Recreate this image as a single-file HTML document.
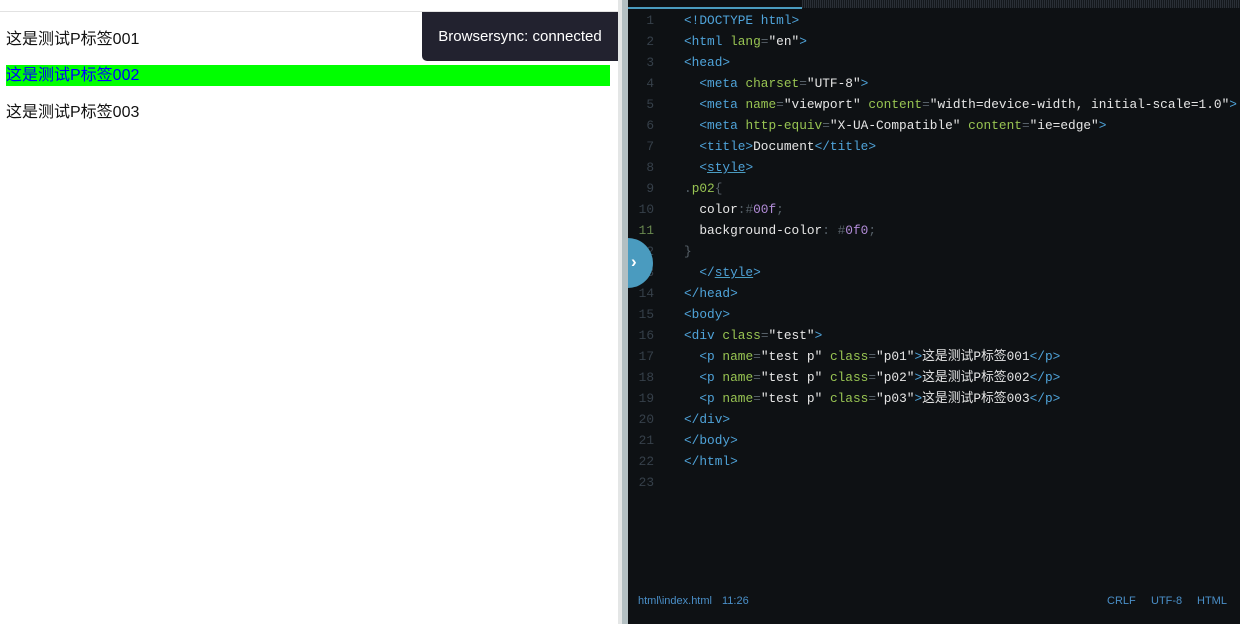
<!DOCTYPE html>
<html><head><meta charset="utf-8"><style>
body{margin:0;width:1240px;height:624px;overflow:hidden;background:#fff;position:relative;font-family:"Liberation Sans","Noto Sans CJK SC",sans-serif}
.left{position:absolute;left:0;top:0;width:618px;height:624px;background:#fff}
.hr{position:absolute;left:0;top:11px;width:618px;height:1px;background:#e2e2e2}
.p{position:absolute;left:6px;font-size:16px;color:#111;line-height:21px}
.toast{position:absolute;left:422px;top:12px;width:196px;height:49px;background:#22222f;color:#fff;border-bottom-left-radius:5px;font-size:15px;line-height:49px;text-align:center}
.sep1{position:absolute;left:618px;top:0;width:4px;height:624px;background:#e4e6e6}
.sep2{position:absolute;left:622px;top:0;width:6px;height:624px;background:#b3bfc2}
.ed{position:absolute;left:628px;top:0;width:612px;height:624px;background:#0e1114;overflow:hidden}
.tab{position:absolute;left:0;top:7px;width:174px;height:2px;background:#4a9bbf}
.dots{position:absolute;left:174px;top:0;width:438px;height:8px;background:repeating-linear-gradient(90deg,#2a2f36 0 1px,#14181c 1px 2px)}
.code{position:absolute;left:0;top:10px;font-family:"Liberation Mono","Noto Sans CJK SC",monospace;font-size:12.8px;line-height:21px;white-space:pre}
.ln{display:inline-block;width:26px;text-align:right;color:#36404a;margin-right:30px}
.t{color:#4fa3d9}.a{color:#98c452}.s{color:#e6e6e6}.w{color:#e6e6e6}.g{color:#566068}.n{color:#b28cd8}
.circ{position:absolute;left:-25px;top:238px;width:50px;height:50px;border-radius:50%;background:#4a9bbf}
.status{position:absolute;top:595px;font-size:11px;color:#4a8fc8}
</style></head><body>
<div class="left">
<div class="hr"></div>
<div class="p" style="top:29px">这是测试P标签001</div>
<div style="position:absolute;left:6px;top:65px;width:604px;height:21px;background:#00ff00"></div>
<div class="p" style="top:65px;color:#0000ff">这是测试P标签002</div>
<div class="p" style="top:102px">这是测试P标签003</div>
<div class="toast">Browsersync: connected</div>
</div>
<div class="sep1"></div><div class="sep2"></div>
<div class="ed">
<div class="tab"></div><div class="dots"></div>
<div class="code"><span class="ln">1</span><span class="t">&lt;!DOCTYPE html&gt;</span>
<span class="ln">2</span><span class="t">&lt;html </span><span class="a">lang</span><span class="g">=</span><span class="s">"en"</span><span class="t">&gt;</span>
<span class="ln">3</span><span class="t">&lt;head&gt;</span>
<span class="ln">4</span>  <span class="t">&lt;meta </span><span class="a">charset</span><span class="g">=</span><span class="s">"UTF-8"</span><span class="t">&gt;</span>
<span class="ln">5</span>  <span class="t">&lt;meta </span><span class="a">name</span><span class="g">=</span><span class="s">"viewport"</span> <span class="a">content</span><span class="g">=</span><span class="s">"width=device-width, initial-scale=1.0"</span><span class="t">&gt;</span>
<span class="ln">6</span>  <span class="t">&lt;meta </span><span class="a">http-equiv</span><span class="g">=</span><span class="s">"X-UA-Compatible"</span> <span class="a">content</span><span class="g">=</span><span class="s">"ie=edge"</span><span class="t">&gt;</span>
<span class="ln">7</span>  <span class="t">&lt;title&gt;</span><span class="w">Document</span><span class="t">&lt;/title&gt;</span>
<span class="ln">8</span>  <span class="t">&lt;<u style="text-decoration-color:#4a9bbf">style</u>&gt;</span>
<span class="ln">9</span><span class="g">.</span><span class="a">p02</span><span class="g">{</span>
<span class="ln">10</span>  <span class="w">color</span><span class="g">:#</span><span class="n">00f</span><span class="g">;</span>
<span class="ln" style="color:#6a8a50">11</span>  <span class="w">background-color</span><span class="g">: #</span><span class="n">0f0</span><span class="g">;</span>
<span class="ln">12</span><span class="g">}</span>
<span class="ln">13</span>  <span class="t">&lt;/<u style="text-decoration-color:#4a9bbf">style</u>&gt;</span>
<span class="ln">14</span><span class="t">&lt;/head&gt;</span>
<span class="ln">15</span><span class="t">&lt;body&gt;</span>
<span class="ln">16</span><span class="t">&lt;div </span><span class="a">class</span><span class="g">=</span><span class="s">"test"</span><span class="t">&gt;</span>
<span class="ln">17</span>  <span class="t">&lt;p </span><span class="a">name</span><span class="g">=</span><span class="s">"test p"</span> <span class="a">class</span><span class="g">=</span><span class="s">"p01"</span><span class="t">&gt;</span><span class="w">这是测试P标签001</span><span class="t">&lt;/p&gt;</span>
<span class="ln">18</span>  <span class="t">&lt;p </span><span class="a">name</span><span class="g">=</span><span class="s">"test p"</span> <span class="a">class</span><span class="g">=</span><span class="s">"p02"</span><span class="t">&gt;</span><span class="w">这是测试P标签002</span><span class="t">&lt;/p&gt;</span>
<span class="ln">19</span>  <span class="t">&lt;p </span><span class="a">name</span><span class="g">=</span><span class="s">"test p"</span> <span class="a">class</span><span class="g">=</span><span class="s">"p03"</span><span class="t">&gt;</span><span class="w">这是测试P标签003</span><span class="t">&lt;/p&gt;</span>
<span class="ln">20</span><span class="t">&lt;/div&gt;</span>
<span class="ln">21</span><span class="t">&lt;/body&gt;</span>
<span class="ln">22</span><span class="t">&lt;/html&gt;</span>
<span class="ln">23</span></div>
<div class="status" style="left:10px">html\index.html</div>
<div class="status" style="left:94px">11:26</div>
<div class="status" style="left:479px">CRLF</div>
<div class="status" style="left:523px">UTF-8</div>
<div class="status" style="left:569px">HTML</div>
<div class="circ"></div>
<div style="position:absolute;left:3px;top:252px;color:#fff;font:bold 17px 'Liberation Sans',sans-serif">›</div>
</div>
</body></html>
